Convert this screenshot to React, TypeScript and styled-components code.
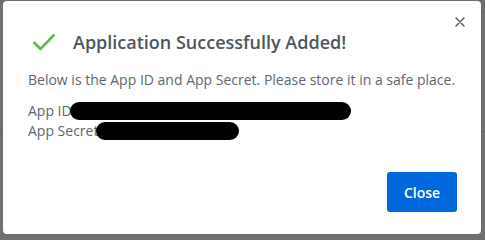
import React from "react";
import styled, { createGlobalStyle } from "styled-components";

const Global = createGlobalStyle`
  html, body { margin: 0; padding: 0; }
  body {
    background: #6e6e6e;
    font-family: "Open Sans", "Noto Sans", sans-serif;
    width: 485px;
    height: 240px;
    overflow: hidden;
  }
`;

const Backdrop = styled.div`
  width: 485px;
  height: 240px;
  padding: 1px 4px 0 3px;
  box-sizing: border-box;
  background:
    linear-gradient(#666 0 0) 0 12px / 100% 1px no-repeat,
    linear-gradient(#646464 0 0) 0 131px / 100% 1px no-repeat,
    #6f6f6f;
`;

const Modal = styled.div`
  position: relative;
  width: 478px;
  height: 233px;
  background: #fff;
  border-radius: 4px;
  box-sizing: border-box;
  padding: 29px 24px 22px 25px;
  display: flex;
  flex-direction: column;
`;

const CloseX = styled.button`
  position: absolute;
  top: 14px;
  right: 14px;
  width: 14px;
  height: 14px;
  padding: 0;
  border: none;
  background: none;
  display: flex;
  align-items: center;
  justify-content: center;
  cursor: pointer;
`;

const Header = styled.div`
  display: flex;
  align-items: center;
  gap: 17px;
  height: 24px;
  padding-left: 4px;
`;

const Title = styled.h2`
  margin: 0;
  font-size: 18px;
  font-weight: 600;
  line-height: 24px;
  color: #4b5661;
`;

const Text = styled.p<{ $top?: number }>`
  margin: ${(p) => p.$top ?? 0}px 0 0;
  font-size: 14px;
  line-height: 20px;
  color: #5c6770;
`;

const Redact = styled.span<{ $w: number; $ml: number }>`
  display: inline-block;
  vertical-align: middle;
  width: ${(p) => p.$w}px;
  height: 18px;
  margin-left: ${(p) => p.$ml}px;
  margin-top: -2px;
  background: #000;
  border-radius: 9px;
`;

const Footer = styled.div`
  margin-top: auto;
  display: flex;
  justify-content: flex-end;
`;

const Button = styled.button`
  width: 70px;
  height: 40px;
  border: none;
  border-radius: 3px;
  background: #0067dd;
  color: #fff;
  font-family: "Open Sans", "Noto Sans", sans-serif;
  font-size: 14px;
  font-weight: 600;
  cursor: pointer;
`;

export default function App() {
  return (
    <>
      <Global />
      <Backdrop>
        <Modal>
          <CloseX aria-label="Close">
            <svg width="10" height="10" viewBox="0 0 10 10">
              <path d="M1 1L9 9M9 1L1 9" stroke="#4b5661" strokeWidth="1.4" strokeLinecap="round" />
            </svg>
          </CloseX>
          <Header>
            <svg width="24" height="18" viewBox="0 0 24 18">
              <path d="M1.5 9L8.5 16L22.5 1.5" fill="none" stroke="#5cb94a" strokeWidth="2.6" />
            </svg>
            <Title>Application Successfully Added!</Title>
          </Header>
          <Text $top={16}>Below is the App ID and App Secret. Please store it in a safe place.</Text>
          <Text $top={11}>
            App ID<Redact $w={281} $ml={-2} />
          </Text>
          <Text>
            App Secret<Redact $w={143} $ml={-2} />
          </Text>
          <Footer>
            <Button>Close</Button>
          </Footer>
        </Modal>
      </Backdrop>
    </>
  );
}
